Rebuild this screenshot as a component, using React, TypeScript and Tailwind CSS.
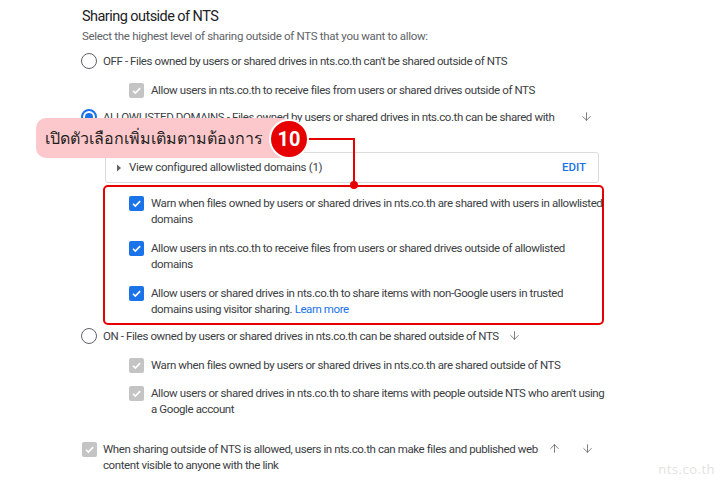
import React from 'react';
import { ArrowDown, ArrowUp } from 'lucide-react';

function Radio({ checked }: { checked?: boolean }) {
  return checked ? (
    <div className="w-4 h-4 shrink-0 rounded-full border-2 border-[#1a73e8] flex items-center justify-center">
      <div className="w-2 h-2 rounded-full bg-[#1a73e8]" />
    </div>
  ) : (
    <div className="w-4 h-4 shrink-0 rounded-full border-[1.5px] border-[#5f6368]" />
  );
}

function Check({ on }: { on?: boolean }) {
  return (
    <div className={`w-[15px] h-[15px] mt-[1px] shrink-0 rounded-[2px] flex items-center justify-center ${on ? 'bg-[#1a73e8]' : 'bg-[#c4c4c4]'}`}>
      <svg width="11" height="11" viewBox="0 0 12 12" fill="none">
        <path d="M2.2 6.3l2.5 2.5L10 3.4" stroke="white" strokeWidth="1.8" />
      </svg>
    </div>
  );
}

function Lines({ lines }: { lines: React.ReactNode[] }) {
  return (
    <div className="text-[11.5px] tracking-[-0.4px] leading-4 text-[#3c4043]">
      {lines.map((l, i) => (
        <div key={i} className="whitespace-nowrap">{l}</div>
      ))}
    </div>
  );
}

const Link = () => <span className="text-[#1a73e8]">Learn more</span>;

export default function App() {
  return (
    <div className="relative w-[720px] h-[484px] overflow-hidden bg-white font-['Roboto','Liberation_Sans',sans-serif]">
      <div className="pl-[82px] pt-[7px]">
        <div className="text-[14.5px] tracking-[-0.55px] leading-5 text-[#202124]">Sharing outside of NTS</div>
        <div className="mt-[1px] text-[11.5px] tracking-[-0.3px] leading-4 text-[#5f6368]">
          Select the highest level of sharing outside of NTS that you want to allow:
        </div>

        <div className="mt-[9px] flex items-start gap-[6px] -ml-[1px]">
          <Radio />
          <Lines lines={["OFF - Files owned by users or shared drives in nts.co.th can't be shared outside of NTS"]} />
        </div>

        <div className="mt-[13px] ml-[47px] flex items-start gap-[7px]">
          <Check />
          <Lines lines={['Allow users in nts.co.th to receive files from users or shared drives outside of NTS']} />
        </div>

        <div className="mt-[11px] flex items-start gap-[6px] -ml-[1px] w-[512px]">
          <Radio checked />
          <div className="flex-1 min-w-0">
            <Lines
              lines={[
                'ALLOWLISTED DOMAINS - Files owned by users or shared drives in nts.co.th can be shared with',
                <>users in allowlisted domains. <Link /></>,
              ]}
            />
          </div>
          <ArrowDown className="w-[13px] h-[13px] mt-[1px] shrink-0 text-[#5f6368]" strokeWidth={1.5} />
        </div>

        <div className="mt-[11px] ml-[23px] w-[494px] h-[31px] border border-[#dadce0] rounded-[3px] flex items-center pl-[10px] pr-[12px]">
          <svg width="6" height="8" viewBox="0 0 6 8" className="mr-[7px]">
            <path d="M1 0.5L5 4L1 7.5Z" fill="#5f6368" />
          </svg>
          <span className="text-[11.5px] tracking-[-0.3px] text-[#3c4043] flex-1">View configured allowlisted domains (1)</span>
          <span className="text-[11.5px] font-medium text-[#1a73e8]">EDIT</span>
        </div>

        <div className="mt-[2px] ml-[21px] w-[501px] border-2 border-[#e60000] rounded-[5px] pl-[24px] pt-[8px] pb-[6px] flex flex-col gap-[13px]">
          <div className="flex items-start gap-[7px]">
            <Check on />
            <Lines
              lines={[
                'Warn when files owned by users or shared drives in nts.co.th are shared with users in allowlisted',
                'domains',
              ]}
            />
          </div>
          <div className="flex items-start gap-[7px]">
            <Check on />
            <Lines
              lines={[
                'Allow users in nts.co.th to receive files from users or shared drives outside of allowlisted',
                'domains',
              ]}
            />
          </div>
          <div className="flex items-start gap-[7px]">
            <Check on />
            <Lines
              lines={[
                'Allow users or shared drives in nts.co.th to share items with non-Google users in trusted',
                <>domains using visitor sharing. <Link /></>,
              ]}
            />
          </div>
        </div>

        <div className="mt-[3px] flex items-start gap-[6px] -ml-[1px]">
          <Radio />
          <Lines lines={['ON - Files owned by users or shared drives in nts.co.th can be shared outside of NTS']} />
          <ArrowDown className="w-[13px] h-[13px] mt-[1px] ml-[3px] text-[#5f6368]" strokeWidth={1.5} />
        </div>

        <div className="mt-[13px] ml-[47px] flex items-start gap-[7px]">
          <Check />
          <Lines lines={['Warn when files owned by users or shared drives in nts.co.th are shared outside of NTS']} />
        </div>

        <div className="mt-[12px] ml-[47px] flex items-start gap-[7px]">
          <Check />
          <div className="leading-[17px]">
            <Lines
              lines={[
                "Allow users or shared drives in nts.co.th to share items with people outside NTS who aren't using",
                'a Google account',
              ]}
            />
          </div>
        </div>

        <div className="mt-[24px] flex items-start gap-[6px] w-[512px]">
          <Check />
          <div className="flex-1 min-w-0">
            <Lines
              lines={[
                'When sharing outside of NTS is allowed, users in nts.co.th can make files and published web',
                'content visible to anyone with the link',
              ]}
            />
          </div>
          <ArrowUp className="w-[13px] h-[13px] mt-[1px] shrink-0 text-[#5f6368]" strokeWidth={1.5} />
          <ArrowDown className="w-[13px] h-[13px] mt-[1px] ml-[14px] shrink-0 text-[#5f6368]" strokeWidth={1.5} />
        </div>
      </div>

      {/* callout */}
      <div className="absolute left-[36px] top-[118px] w-[256px] h-[40px] rounded-[10px] bg-[#fdc8cb] pl-[9px] flex items-center">
        <span className="text-[16px] text-[#1f1f1f] font-['Noto_Sans','Noto_Sans_CJK_SC',sans-serif] whitespace-nowrap">
          เปิดตัวเลือกเพิ่มเติมตามต้องการ
        </span>
      </div>
      <div className="absolute left-[308px] top-[138px] w-[47px] h-[2px] bg-[#e60000]" />
      <div className="absolute left-[353px] top-[138px] w-[2px] h-[47px] bg-[#e60000]" />
      <div className="absolute left-[350px] top-[181px] w-[8px] h-[8px] rounded-full bg-[#e60000]" />
      <div className="absolute left-[269px] top-[119px] w-[40px] h-[40px] rounded-full bg-[#e60000] border-2 border-white flex items-center justify-center">
        <span className="text-white text-[20px] font-bold font-['Roboto',sans-serif]">10</span>
      </div>

      <div className="absolute right-[5px] bottom-[5px] text-[13px] tracking-[0.5px] text-[#e3e3e3] font-['Open_Sans',sans-serif]">
        nts.co.th
      </div>
    </div>
  );
}
